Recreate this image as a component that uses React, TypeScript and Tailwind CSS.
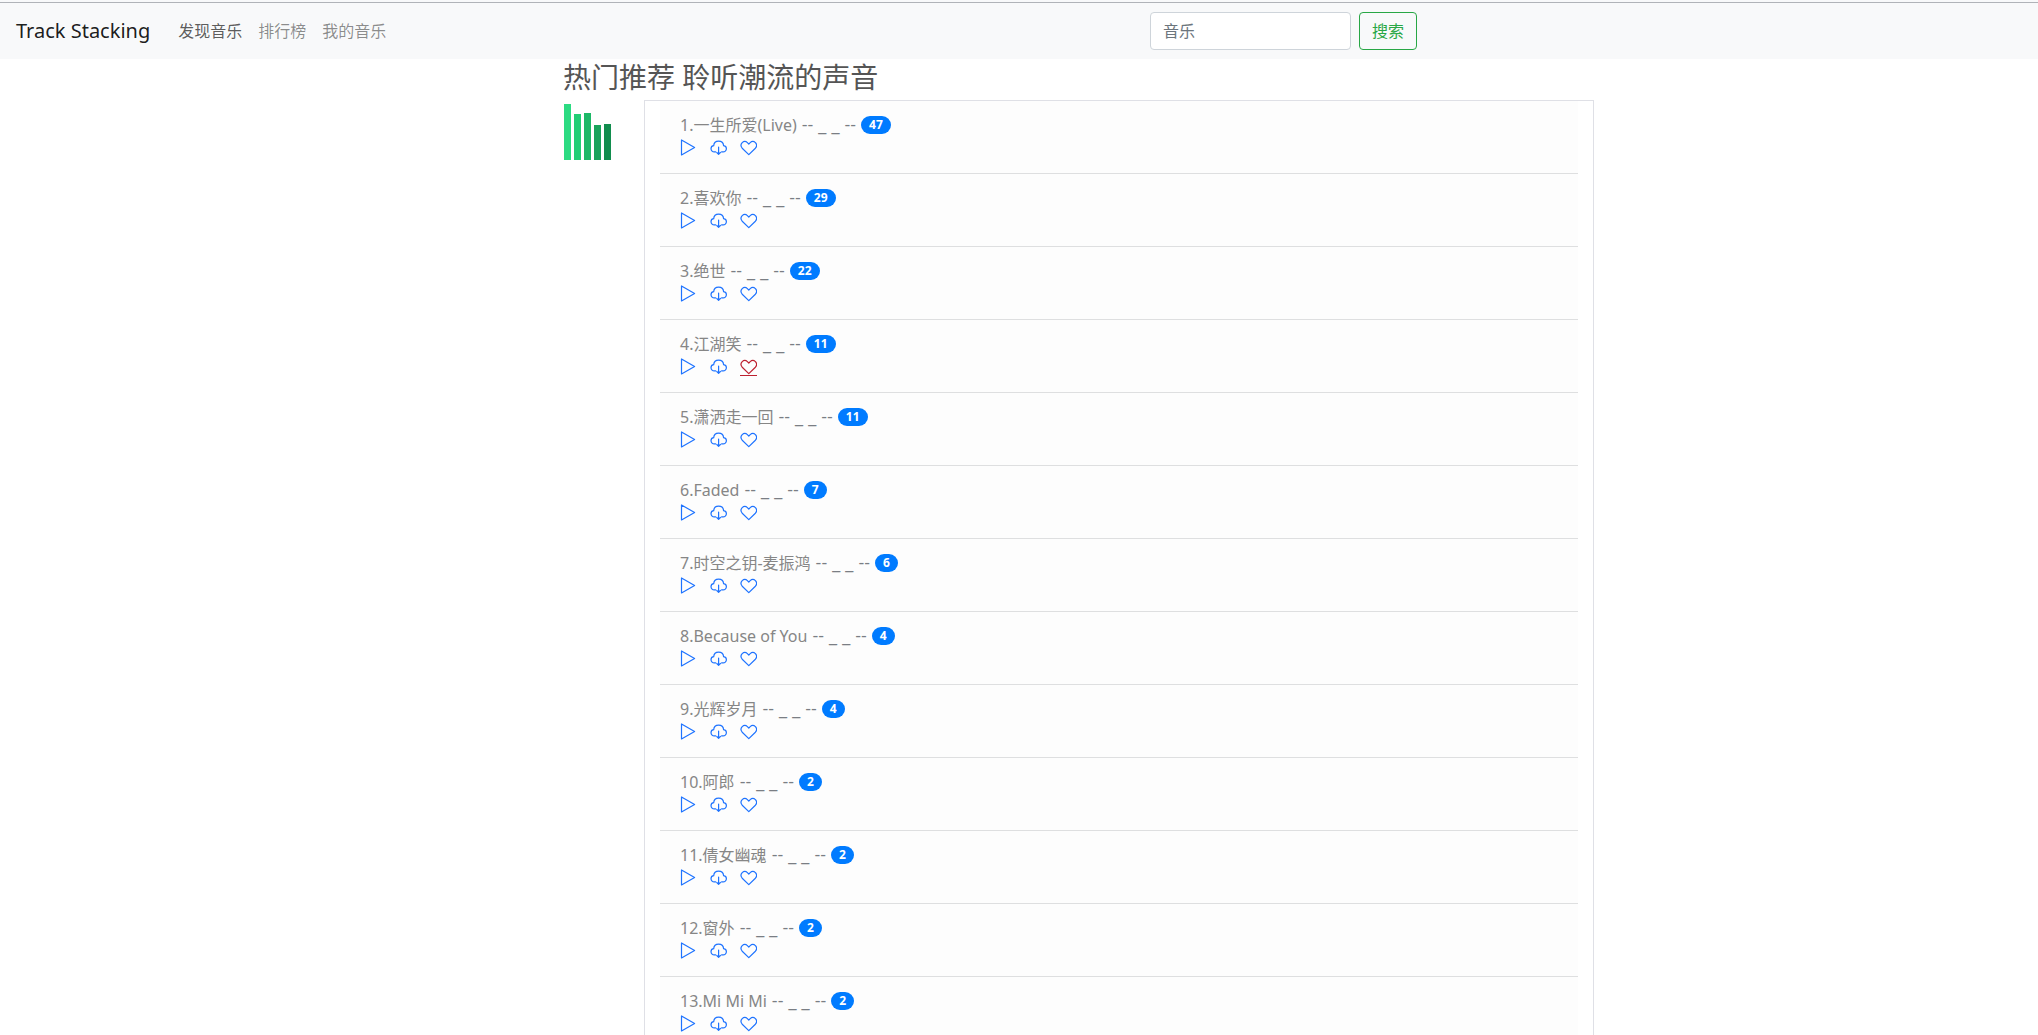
const navLinks = [
    { label: "发现音乐", active: true },
    { label: "排行榜", active: false },
    { label: "我的音乐", active: false },
];

const tracks = [
    { name: "一生所爱(Live)", count: 47 },
    { name: "喜欢你", count: 29 },
    { name: "绝世", count: 22 },
    { name: "江湖笑", count: 11, hovered: true },
    { name: "潇洒走一回", count: 11 },
    { name: "Faded", count: 7 },
    { name: "时空之钥-麦振鸿", count: 6 },
    { name: "Because of You", count: 4 },
    { name: "光辉岁月", count: 4 },
    { name: "阿郎", count: 2 },
    { name: "倩女幽魂", count: 2 },
    { name: "窗外", count: 2 },
    { name: "Mi Mi Mi", count: 2 },
];

const iconProps = {
    viewBox: "0 0 17 17",
    className: "w-[17px] h-[17px]",
    fill: "none",
    stroke: "currentColor",
    strokeWidth: 1.2,
    strokeLinejoin: "round" as const,
    strokeLinecap: "round" as const,
};

function PlayIcon() {
    return (
        <svg {...iconProps}>
            <path d="M1.5 1v15L14.6 8.5z" />
        </svg>
    );
}

function CloudIcon() {
    return (
        <svg {...iconProps}>
            <path d="M5.6 12.9H4.4A3.2 3.2 0 0 1 1 9.8c0-1.600 1-2.900 2.700-3.100C3.900 4.100 5.900 2.200 8.600 2.200s4.800 1.900 5 4.500c1.700.2 2.800 1.500 2.800 3.100a3.200 3.200 0 0 1-3.500 3.100h-1.300" />
            <path d="M8.600 8v7.200M6.800 13.500l1.800 1.800 1.800-1.800" />
        </svg>
    );
}

function HeartIcon() {
    return (
        <svg {...iconProps}>
            <path d="M8.800 15.600 2.200 9.200C.800 7.600.800 5.100 2.200 3.600c1.500-1.400 3.700-1.400 5.200 0l1.400 1.500 1.400-1.500c1.500-1.400 3.700-1.400 5.200 0 1.400 1.500 1.400 4 0 5.600z" />
        </svg>
    );
}

function Navbar() {
    return (
        <nav className="grid grid-cols-[1150fr_888fr] items-center h-14 bg-[#f8f9fa]">
            <div className="flex items-center pl-4">
                <a href="#" className="text-xl leading-[30px] text-black/90 mr-7">
                    Track Stacking
                </a>
                <ul className="flex gap-4">
                    {navLinks.map((link) => (
                        <li key={link.label}>
                            <a href="#" className={link.active ? "text-black/65" : "text-black/45"}>
                                {link.label}
                            </a>
                        </li>
                    ))}
                </ul>
            </div>
            <form className="flex gap-2" onSubmit={(e) => e.preventDefault()}>
                <input
                    type="search"
                    placeholder="音乐"
                    aria-label="音乐"
                    className="w-[201px] h-[38px] px-3 bg-white border border-[#ced4da] rounded text-[#495057] placeholder:text-[#6c757d] outline-none"
                />
                <button className="h-[38px] px-3 border border-[#28a745] rounded text-[#28a745]">搜索</button>
            </form>
        </nav>
    );
}

function Equalizer() {
    return (
        <svg viewBox="0 0 47 56" className="w-[47px] h-14 mt-1 ml-px">
            <rect x="0" y="0" width="7" height="56" fill="#2cdb82" />
            <rect x="10" y="10" width="7" height="46" fill="#22ce75" />
            <rect x="20" y="9" width="7" height="47" fill="#1db867" />
            <rect x="30" y="21" width="7" height="35" fill="#19a35b" />
            <rect x="40" y="20" width="7" height="36" fill="#128d4e" />
        </svg>
    );
}

export default function App() {
    return (
        <div className="h-screen overflow-y-auto [scrollbar-width:none] bg-white text-base font-['Noto_Sans','Noto_Sans_CJK_SC',sans-serif]">
            <div className="h-[3px] bg-[#f8f9fa] border-b border-[#b0b3b8]" />
            <Navbar />

            <main className="grid grid-cols-[563fr_1031fr_444fr]">
                <div className="col-start-2">
                    <h1 className="text-[28px] leading-9 mb-[5px] text-[#555]">热门推荐 聆听潮流的声音</h1>

                    <div className="flex">
                        <div className="w-[81px] shrink-0">
                            <Equalizer />
                        </div>

                        <ul className="flex-1 px-[15px] border border-[#dfe0e6]">
                            {tracks.map((track, index) => (
                                <li key={track.name} className="px-5 py-3 bg-[#fdfdfd] border-b border-[#dedfe0]">
                                    <div className="flex items-center gap-[5px] h-6 text-[#868686]">
                                        <span>
                                            {index + 1}.{track.name}
                                        </span>
                                        <span className="font-['DejaVu_Sans',sans-serif] text-[#7a7e84]">-- _ _ --</span>
                                        <span className="px-2 py-[3px] rounded-full bg-[#007bff] text-white text-xs leading-3 font-bold">
                                            {track.count}
                                        </span>
                                    </div>
                                    <div className="flex gap-[13px] h-6 pt-[2px] text-[#1e73ff]">
                                        <button aria-label="播放" className="h-[17px]">
                                            <PlayIcon />
                                        </button>
                                        <button aria-label="下载" className="h-[17px]">
                                            <CloudIcon />
                                        </button>
                                        <button
                                            aria-label="收藏"
                                            className={
                                                track.hovered
                                                    ? "h-[18px] border-b border-[#bd2130] text-[#bd2130]"
                                                    : "h-[17px]"
                                            }
                                        >
                                            <HeartIcon />
                                        </button>
                                    </div>
                                </li>
                            ))}
                        </ul>
                    </div>
                </div>
            </main>
        </div>
    );
}
